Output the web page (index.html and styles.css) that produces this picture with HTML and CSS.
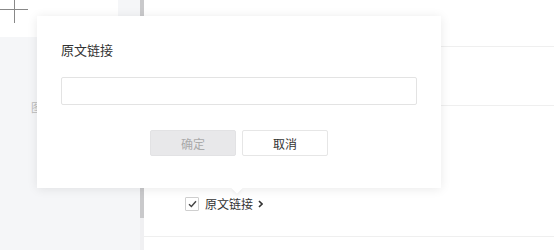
FILE: index.html
```html
<!DOCTYPE html>
<html>
<head>
<meta charset="utf-8">
<link rel="stylesheet" href="styles.css">
</head>
<body>
<div class="app">
  <aside class="side">
    <div class="card">
      <svg class="plus" width="29" height="24" viewBox="0 0 29 24"><path d="M14.5 0V23M0 9.5H28" stroke="#888" stroke-width="1" fill="none"/></svg>
    </div>
    <div class="side-label">图片</div>
  </aside>
  <div class="track"><div class="thumb"></div></div>
  <main class="main">
    <div class="row r1"></div>
    <div class="row r2"></div>
    <div class="row r3">
      <label class="check">
        <span class="box"><svg width="9" height="8" viewBox="0 0 9 8"><path d="M1 4.2L3.4 6.5L8 1.2" stroke="#444" stroke-width="1.4" fill="none"/></svg></span>
        <span class="check-text">原文链接</span>
        <svg class="chev" width="5" height="8" viewBox="0 0 5 8"><path d="M1 1L4 4L1 7" stroke="#333" stroke-width="1.6" fill="none"/></svg>
      </label>
    </div>
  </main>
</div>
<div class="dialog">
  <div class="title">原文链接</div>
  <div class="input"></div>
  <div class="actions">
    <button class="btn disabled">确定</button>
    <button class="btn">取消</button>
  </div>
  <span class="tip"></span>
</div>
</body>
</html>
```
FILE: styles.css
```css
html, body {
  margin: 0;
  padding: 0;
  width: 554px;
  height: 250px;
  overflow: hidden;
  background: #fff;
  font-family: "Noto Sans CJK SC", "Noto Sans", sans-serif;
}
.app {
  display: flex;
  height: 250px;
}
.side {
  width: 140px;
  background: #f5f6f8;
  display: flex;
  flex-direction: column;
}
.card {
  width: 118px;
  height: 37px;
  background: #fff;
}
.plus {
  display: block;
}
.side-label {
  margin: 62px 0 0 31px;
  font-size: 11px;
  color: #bbb;
  line-height: 16px;
}
.track {
  width: 4px;
  background: #f0f0f2;
}
.thumb {
  height: 218px;
  background: #c9c9cb;
}
.main {
  flex: 1;
  display: flex;
  flex-direction: column;
}
.row {
  border-bottom: 1px solid #efefef;
}
.r1 { height: 46px; }
.r2 { height: 58px; }
.r3 {
  height: 131px;
  display: flex;
  align-items: flex-end;
  padding-left: 41px;
  box-sizing: border-box;
  padding-bottom: 24px;
}
.check {
  display: flex;
  align-items: center;
  gap: 6px;
  font-size: 12px;
  color: #333;
  line-height: 16px;
}
.box {
  width: 12px;
  height: 12px;
  border: 1px solid #cfcfcf;
  border-radius: 1px;
  display: flex;
  align-items: center;
  justify-content: center;
  background: #fff;
}
.check-text {
  margin-right: -1px;
}
.chev {
  display: block;
}
.dialog {
  position: absolute;
  left: 37px;
  top: 16px;
  width: 404px;
  height: 172px;
  box-sizing: border-box;
  background: #fff;
  box-shadow: 0 1px 10px rgba(0, 0, 0, 0.09);
  padding: 24px 24px 0 24px;
}
.title {
  font-size: 13px;
  line-height: 20px;
  color: #333;
}
.input {
  margin-top: 17px;
  height: 28px;
  box-sizing: border-box;
  border: 1px solid #e3e3e3;
  border-radius: 2px;
}
.actions {
  display: flex;
  justify-content: center;
  gap: 6px;
  margin-top: 25px;
}
.btn {
  width: 86px;
  height: 26px;
  box-sizing: border-box;
  border: 1px solid #e6e6e6;
  border-radius: 2px;
  background: #fff;
  color: #333;
  font-family: "Noto Sans CJK SC", "Noto Sans", sans-serif;
  font-size: 12px;
  padding: 0;
}
.btn.disabled {
  background: #e8e8ea;
  border-color: #e2e2e4;
  color: #aaa;
}
.tip {
  position: absolute;
  left: 196px;
  bottom: -4px;
  width: 8px;
  height: 8px;
  background: #fff;
  transform: rotate(45deg);
  box-shadow: 2px 2px 3px rgba(0, 0, 0, 0.04);
}
```
